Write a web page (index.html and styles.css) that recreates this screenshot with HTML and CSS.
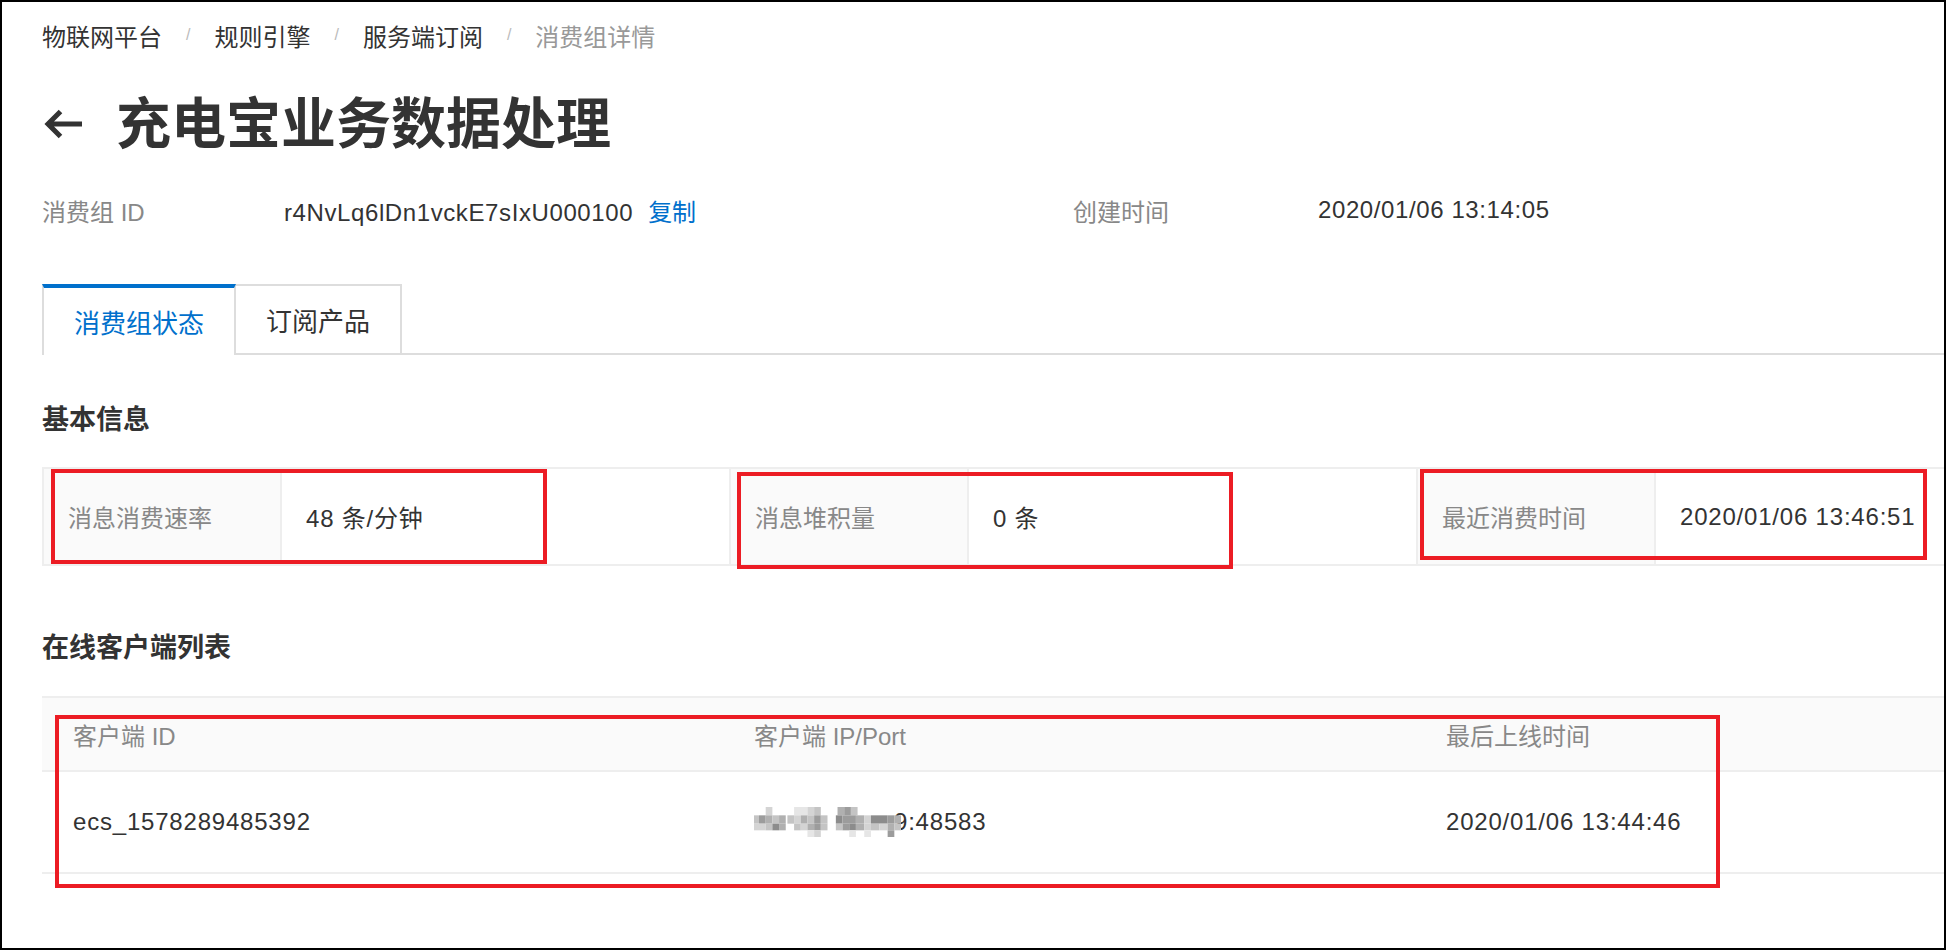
FILE: index.html
```
<!DOCTYPE html>
<html lang="zh-CN">
<head>
    <meta charset="UTF-8">
    <meta name="viewport" content="width=device-width, initial-scale=1.0">
    <title>消费组详情</title>
    <link rel="stylesheet" href="styles.css">
</head>
<body>

    <div class="frame">
        <div class="breadcrumb">
            <a href="#">物联网平台</a>
            <span class="sep">/</span>
            <a href="#">规则引擎</a>
            <span class="sep">/</span>
            <a href="#">服务端订阅</a>
            <span class="sep">/</span>
            <span class="current">消费组详情</span>
        </div>

        <div class="title-row">
            <a class="back" href="#">
                <svg width="40" height="32" viewBox="0 0 40 32">
                    <path d="M40 16 H6 M18.5 3.5 L6 16 L18.5 28.5" fill="none" stroke="#333" stroke-width="5"></path>
                </svg>
            </a>
            <h1>充电宝业务数据处理</h1>
        </div>

        <div class="info">
            <span class="info-label">消费组 ID</span>
            <span class="info-value">r4NvLq6lDn1vckE7sIxU000100<a class="copy" href="#">复制</a></span>
            <span class="info-label">创建时间</span>
            <span class="info-value">2020/01/06 13:14:05</span>
        </div>

        <div class="tabs">
            <div class="tab active">消费组状态</div>
            <div class="tab">订阅产品</div>
        </div>

        <h3 class="section-title">基本信息</h3>

        <div class="stats-wrap">
            <div class="stats">
                <div class="stat-label">消息消费速率</div>
                <div class="stat-value">48 条/分钟</div>
                <div class="stat-label">消息堆积量</div>
                <div class="stat-value">0 条</div>
                <div class="stat-label">最近消费时间</div>
                <div class="stat-value">2020/01/06 13:46:51</div>
            </div>
            <!-- annotation boxes -->
            <div class="mark mark-1"></div>
            <div class="mark mark-2"></div>
            <div class="mark mark-3"></div>
        </div>

        <h3 class="section-title section-gap">在线客户端列表</h3>

        <div class="client-wrap">
            <div class="client-table">
                <div class="client-head">
                    <div class="cell">客户端 ID</div>
                    <div class="cell">客户端 IP/Port</div>
                    <div class="cell">最后上线时间</div>
                </div>
                <div class="client-row">
                    <div class="cell">ecs_1578289485392</div>
                    <div class="cell">
                        <svg class="mosaic" width="147" height="30" viewBox="45 45 440 90" preserveAspectRatio="none">
                            <rect x="80" y="45" width="20" height="25" fill="#d4d4d4"/>
                            <rect x="165" y="45" width="40" height="25" fill="#e6e6e6"/>
                            <rect x="205" y="45" width="20" height="25" fill="#d4d4d4"/>
                            <rect x="225" y="45" width="20" height="25" fill="#c4c4c4"/>
                            <rect x="295" y="45" width="20" height="25" fill="#b0b0b0"/>
                            <rect x="315" y="45" width="20" height="25" fill="#9c9c9c"/>
                            <rect x="335" y="45" width="20" height="25" fill="#c4c4c4"/>

                            <rect x="45" y="70" width="15" height="25" fill="#c4c4c4"/>
                            <rect x="60" y="70" width="20" height="25" fill="#9c9c9c"/>
                            <rect x="80" y="70" width="20" height="25" fill="#b0b0b0"/>
                            <rect x="100" y="70" width="20" height="25" fill="#c4c4c4"/>
                            <rect x="120" y="70" width="20" height="25" fill="#b0b0b0"/>
                            <rect x="145" y="70" width="20" height="25" fill="#c4c4c4"/>
                            <rect x="165" y="70" width="20" height="25" fill="#d4d4d4"/>
                            <rect x="185" y="70" width="20" height="25" fill="#b0b0b0"/>
                            <rect x="205" y="70" width="20" height="25" fill="#c4c4c4"/>
                            <rect x="225" y="70" width="20" height="25" fill="#9c9c9c"/>
                            <rect x="245" y="70" width="20" height="25" fill="#c4c4c4"/>
                            <rect x="290" y="70" width="20" height="25" fill="#8c8c8c"/>
                            <rect x="310" y="70" width="40" height="25" fill="#9c9c9c"/>
                            <rect x="350" y="70" width="25" height="25" fill="#b0b0b0"/>
                            <rect x="375" y="70" width="20" height="25" fill="#d4d4d4"/>
                            <rect x="395" y="70" width="50" height="25" fill="#8c8c8c"/>
                            <rect x="445" y="70" width="20" height="25" fill="#9c9c9c"/>
                            <rect x="465" y="70" width="20" height="25" fill="#b0b0b0"/>

                            <rect x="45" y="95" width="35" height="20" fill="#d4d4d4"/>
                            <rect x="80" y="95" width="20" height="20" fill="#c4c4c4"/>
                            <rect x="100" y="95" width="20" height="20" fill="#8c8c8c"/>
                            <rect x="120" y="95" width="20" height="20" fill="#b0b0b0"/>
                            <rect x="165" y="95" width="20" height="20" fill="#c4c4c4"/>
                            <rect x="185" y="95" width="20" height="20" fill="#d4d4d4"/>
                            <rect x="205" y="95" width="20" height="20" fill="#b0b0b0"/>
                            <rect x="225" y="95" width="20" height="20" fill="#9c9c9c"/>
                            <rect x="245" y="95" width="20" height="20" fill="#c4c4c4"/>
                            <rect x="290" y="95" width="20" height="20" fill="#c4c4c4"/>
                            <rect x="310" y="95" width="20" height="20" fill="#9c9c9c"/>
                            <rect x="330" y="95" width="20" height="20" fill="#8c8c8c"/>
                            <rect x="350" y="95" width="25" height="20" fill="#b0b0b0"/>
                            <rect x="375" y="95" width="20" height="20" fill="#d4d4d4"/>
                            <rect x="395" y="95" width="25" height="20" fill="#c4c4c4"/>
                            <rect x="420" y="95" width="25" height="20" fill="#d4d4d4"/>
                            <rect x="445" y="95" width="20" height="20" fill="#b0b0b0"/>
                            <rect x="465" y="95" width="20" height="20" fill="#c4c4c4"/>

                            <rect x="205" y="115" width="20" height="20" fill="#e6e6e6"/>
                            <rect x="225" y="115" width="20" height="20" fill="#d4d4d4"/>
                            <rect x="330" y="115" width="20" height="20" fill="#e6e6e6"/>
                            <rect x="375" y="115" width="20" height="20" fill="#e6e6e6"/>
                            <rect x="445" y="115" width="20" height="20" fill="#9c9c9c"/>
                        </svg>9:48583
                    </div>
                    <div class="cell">2020/01/06 13:44:46</div>
                </div>
            </div>
            <div class="mark mark-4"></div>
        </div>
    </div>

</body>
</html>
```

FILE: styles.css
```
html, body {
    margin: 0;
    height: 100%;
    overflow: hidden;
}
body {
    font-family: "Liberation Sans", "Noto Sans CJK SC", sans-serif;
    background-color: #fff;
    color: #333;
}
a {
    color: inherit;
    text-decoration: none;
}
.frame {
    box-sizing: border-box;
    height: 100%;
    border: 2px solid #000;
    padding-left: 40px;
    overflow: hidden;
}
.breadcrumb {
    display: flex;
    align-items: center;
    height: 66px;
    font-size: 24px;
    color: #333;
}
.breadcrumb .sep {
    margin: 0 24px;
    font-size: 16px;
    color: #bbb;
}
.breadcrumb .current {
    color: #999;
}
.title-row {
    display: flex;
    align-items: center;
    height: 112px;
}
.back {
    display: flex;
    margin-right: 34px;
}
.title-row h1 {
    margin: 0;
    font-size: 55px;
    line-height: 1;
    font-weight: bold;
    color: #333;
}
.info {
    display: grid;
    grid-template-columns: 242px 789px 245px 1fr;
    align-items: center;
    height: 60px;
    font-size: 24px;
}
.info-label {
    color: #888;
}
.info-value {
    color: #333;
    letter-spacing: 0.6px;
}
.copy {
    margin-left: 15px;
    color: #0070cc;
    letter-spacing: 0;
}
.tabs {
    display: flex;
    align-items: flex-end;
    margin-top: 44px;
    border-bottom: 2px solid #ddd;
}
.tab {
    box-sizing: border-box;
    display: flex;
    align-items: center;
    height: 69px;
    padding: 0 30px;
    border: 2px solid #ddd;
    border-bottom: none;
    font-size: 26px;
    color: #333;
    background-color: #fff;
}
.tab + .tab {
    border-left: none;
}
.tab.active {
    height: 71px;
    margin-bottom: -2px;
    border-top: 4px solid #0070cc;
    color: #0070cc;
}
.section-title {
    margin: 45px 0 27px;
    height: 40px;
    line-height: 40px;
    font-size: 27px;
    font-weight: bold;
    color: #333;
}
.section-gap {
    margin-top: 62px;
    margin-bottom: 28px;
}
.stats-wrap, .client-wrap {
    position: relative;
}
.stats {
    display: grid;
    grid-template-columns: 238px 449px 238px 449px 238px 449px;
    width: max-content;
    border: 2px solid #eee;
    font-size: 24px;
}
.stat-label, .stat-value {
    box-sizing: border-box;
    display: flex;
    align-items: center;
    height: 95px;
    padding-left: 24px;
    border-right: 2px solid #eee;
}
.stat-label {
    background-color: #fafafa;
    color: #888;
}
.stat-value {
    color: #333;
    letter-spacing: 0.8px;
}
.client-table {
    border-top: 2px solid #eee;
    font-size: 24px;
}
.client-head, .client-row {
    display: grid;
    grid-template-columns: 681px 692px 1fr;
    align-items: center;
}
.client-head {
    height: 72px;
    background-color: #fafafa;
    border-bottom: 2px solid #eee;
    color: #888;
}
.client-row {
    height: 100px;
    border-bottom: 2px solid #eee;
    color: #333;
    letter-spacing: 0.8px;
}
.cell {
    display: flex;
    align-items: center;
    padding-left: 31px;
}
.mosaic {
    position: relative;
    z-index: 1;
    margin-right: -7px;
}
.mark {
    position: absolute;
    box-sizing: border-box;
    border: 4px solid #ec1c24;
}
.mark-1 {
    left: 9px;
    top: 2px;
    width: 496px;
    height: 95px;
}
.mark-2 {
    left: 695px;
    top: 5px;
    width: 496px;
    height: 97px;
}
.mark-3 {
    left: 1378px;
    top: 2px;
    width: 507px;
    height: 91px;
}
.mark-4 {
    left: 13px;
    top: 19px;
    width: 1665px;
    height: 173px;
}
```
